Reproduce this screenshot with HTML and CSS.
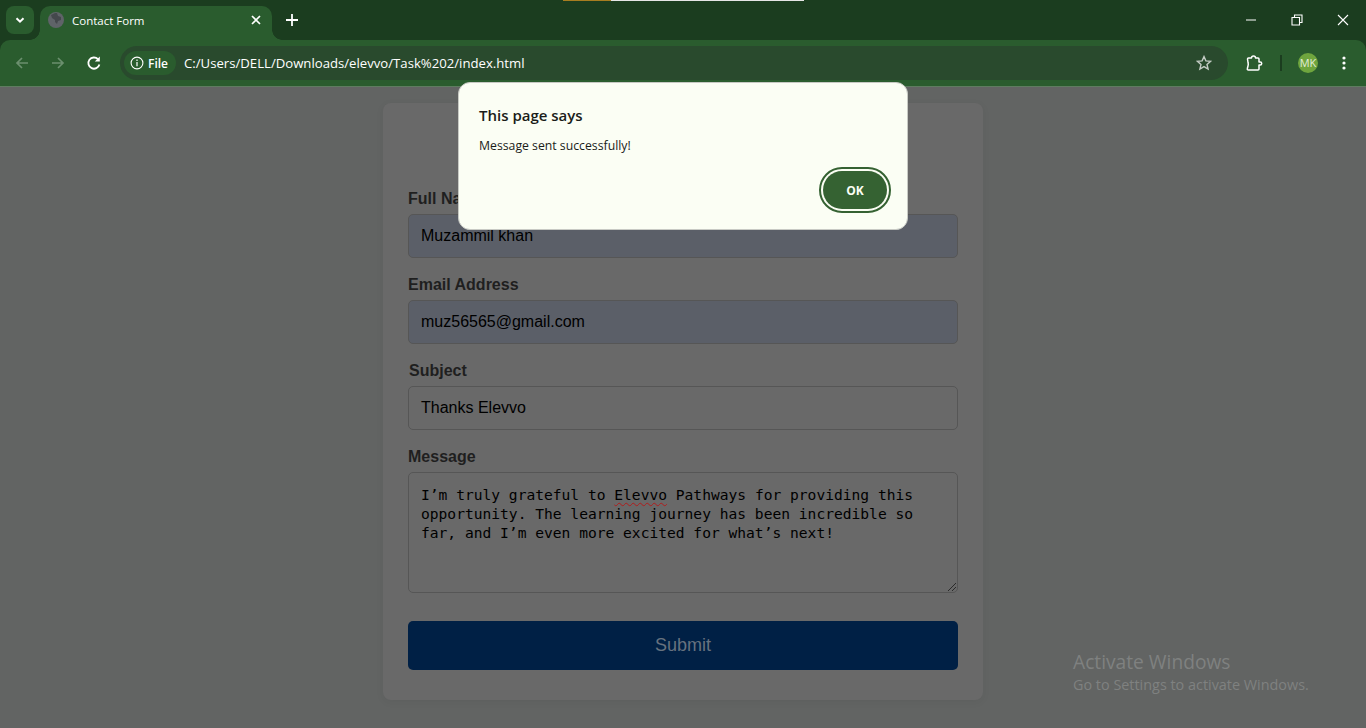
FILE: index.html
```html
<!DOCTYPE html>
<html lang="en">
<head>
<meta charset="utf-8">
<title>Contact Form</title>
<link rel="stylesheet" href="styles.css">
</head>
<body>
<div class="chrome">
<div class="strip">
  <button class="tabsearch"><svg width="12" height="12" viewBox="0 0 12 12"><path d="M2.500 4.200 6 7.700l3.500-3.500" fill="none" stroke="#fff" stroke-width="2"/></svg></button>
  <div class="tab">
    <svg class="globe" width="16" height="16" viewBox="0 0 16 16"><circle cx="8" cy="8" r="8" fill="#5f6368"/><path d="M7 1 3 3l1 3 3 2v2l2 2 1-3 3-1V5l-3-1-1-3z" fill="#44484c"/></svg>
    <span class="tabtitle">Contact Form</span>
    <svg class="tabclose" width="10" height="10" viewBox="0 0 10 10"><path d="M1 1l8 8M9 1 1 9" stroke="#fff" stroke-width="1.700"/></svg>
  </div>
  <svg class="newtab" width="12" height="12" viewBox="0 0 12 12"><path d="M6 0v12M0 6h12" stroke="#fff" stroke-width="1.800"/></svg>
  <div class="winctl">
    <span class="winbtn"><svg width="10" height="10" viewBox="0 0 10 10"><path d="M0 5h10" stroke="#fff"/></svg></span>
    <span class="winbtn"><svg width="12" height="12" viewBox="0 0 12 12"><path d="M1 3.500h7.500V11H1zM3.500 3.500V1H11v7.500H8.500" fill="none" stroke="#fff" stroke-width="1.100"/></svg></span>
    <span class="winbtn"><svg width="12" height="12" viewBox="0 0 12 12"><path d="M1 1l10 10M11 1 1 11" stroke="#fff" stroke-width="1.100"/></svg></span>
  </div>
</div>
<div class="toolbar">
  <svg class="nav" width="16" height="16" viewBox="0 0 16 16"><path d="M14 8H3M8 3 3 8l5 5" fill="none" stroke="#6b8f6e" stroke-width="1.700"/></svg>
  <svg class="nav" width="16" height="16" viewBox="0 0 16 16"><path d="M2 8h11M8 3l5 5-5 5" fill="none" stroke="#6b8f6e" stroke-width="1.700"/></svg>
  <svg class="nav" width="16" height="16" viewBox="0 0 16 16"><path d="M13.400 9.500A5.600 5.600 0 1 1 12 4.200" fill="none" stroke="#fff" stroke-width="1.800"/><path d="M13.800 1.600v5h-5z" fill="#fff"/></svg>
  <div class="omnibox">
    <div class="chip">
      <svg width="14" height="14" viewBox="0 0 14 14"><circle cx="7" cy="7" r="5.900" fill="none" stroke="#fff" stroke-width="1.100"/><path d="M7 6v4.200M7 3.600v1.300" stroke="#fff" stroke-width="1.200"/></svg>
      <span>File</span>
    </div>
    <span class="url">C:/Users/DELL/Downloads/elevvo/Task%202/index.html</span>
    <svg class="star" width="16" height="16" viewBox="0 0 16 16"><path d="M8 1.600l1.900 4.300 4.700.4-3.600 3.100 1.100 4.600L8 11.600l-4.100 2.400L5 9.400 1.400 6.300l4.700-.4z" fill="none" stroke="#c4ccc5" stroke-width="1.400"/></svg>
  </div>
  <svg class="ext" width="18" height="18" viewBox="0 0 18 18"><path d="M3.500 4H6.500a2 2 0 0 1 4 0H13a1 1 0 0 1 1 1v3h1.200a1.500 1.500 0 0 1 0 3H14v4a1 1 0 0 1-1 1H3.300a1 1 0 0 1-1-1.300l.7-2.700c.5-1.500.5-2 0-3.500L2.500 5a1 1 0 0 1 1-1z" fill="none" stroke="#fff" stroke-width="1.500" stroke-linejoin="round"/></svg>
  <span class="divider"></span>
  <span class="avatar">MK</span>
  <svg class="menu" width="4" height="14" viewBox="0 0 4 14"><circle cx="2" cy="2" r="1.600" fill="#fff"/><circle cx="2" cy="7" r="1.600" fill="#fff"/><circle cx="2" cy="12" r="1.600" fill="#fff"/></svg>
</div>
</div>
<main class="page">
  <form class="card">
    <label class="label">Full Name</label>
    <div class="field auto">Muzammil khan</div>
    <label class="label">Email Address</label>
    <div class="field auto">muz56565@gmail.com</div>
    <label class="label subject">Subject</label>
    <div class="field">Thanks Elevvo</div>
    <label class="label">Message</label>
    <div class="area">I’m truly grateful to <span class="typo">Elevvo</span> Pathways for providing this<br>opportunity. The learning journey has been incredible so<br>far, and I’m even more excited for what’s next!
      <svg class="grip" width="8" height="8" viewBox="0 0 8 8"><path d="M0 8 8 0M4 8l4-4" stroke="#2a2a2a"/></svg>
    </div>
    <div class="submit">Submit</div>
  </form>
</main>
<div class="dialog">
  <h1>This page says</h1>
  <p>Message sent successfully!</p>
  <div class="actions"><button class="ok">OK</button></div>
</div>
<div class="topbar"><i></i><b></b></div>
<div class="activate"><strong>Activate Windows</strong><span>Go to Settings to activate Windows.</span></div>
</body>
</html>
```
FILE: styles.css
```css
* { box-sizing: border-box; }
html, body { margin: 0; height: 728px; overflow: hidden; }
body { background: #626463; font-family: "Liberation Sans", Arial, sans-serif; position: relative; }
.chrome { background: #1b3d1f; }
.strip { height: 40px; display: flex; align-items: flex-start; position: relative; }
.tabsearch { width: 28px; height: 28px; margin: 6px 0 0 6px; border: 0; border-radius: 8px; background: #2a5c2e; display: flex; align-items: center; justify-content: center; padding: 0; }
.tab { width: 232px; height: 34px; margin: 6px 0 0 6px; background: #2a5c2e; border-radius: 10px 10px 0 0; display: flex; align-items: center; padding: 0 0 6px 8px; position: relative; }
.tab::before, .tab::after { content: ""; position: absolute; bottom: 0; width: 10px; height: 10px; }
.tab::before { left: -10px; background: radial-gradient(circle at 0 0, transparent 9.500px, #2a5c2e 10px); }
.tab::after { right: -10px; background: radial-gradient(circle at 100% 0, transparent 9.500px, #2a5c2e 10px); }
.globe { flex: none; }
.tabtitle { font: 11.500px "Open Sans", sans-serif; color: #fff; margin-left: 8px; flex: 1; }
.tabclose { margin-right: 11px; }
.newtab { margin: 14px 0 0 14px; }
.winctl { margin-left: auto; display: flex; height: 40px; }
.winbtn { width: 46px; height: 40px; display: flex; align-items: center; justify-content: center; }
.toolbar { height: 47px; background: #2a5c2e; border-radius: 10px 10px 0 0; border-bottom: 1px solid #5e7c60; display: flex; align-items: center; padding: 0 0 0 14px; }
.nav { margin-right: 20px; flex: none; }
.nav:nth-child(3) { margin-right: 18px; }
.omnibox { width: 1108px; height: 34px; border-radius: 17px; background: #294a2d; display: flex; align-items: center; padding: 0 16px 0 4px; }
.chip { width: 52px; height: 24px; border-radius: 12px; background: #2a5c2e; display: flex; align-items: center; padding-left: 6px; gap: 4px; }
.chip span { font: 600 12px "Open Sans", sans-serif; color: #fff; }
.url { font: 13.160px "Open Sans", sans-serif; color: #fff; margin-left: 8px; flex: 1; }
.ext { margin-left: 17px; flex: none; }
.divider { width: 2px; height: 16px; background: #1b3d1f; margin-left: 17px; }
.avatar { width: 20px; height: 20px; border-radius: 50%; background: #6fa53e; color: #e3edd8; font: 11px/20px "Open Sans", sans-serif; text-align: center; margin-left: 16px; }
.menu { margin-left: 24px; }
.page { height: 641px; display: flex; justify-content: center; padding-top: 16px; }
.card { width: 600px; height: 597px; background: #696969; border-radius: 8px; box-shadow: 0 2px 8px rgba(0,0,0,.05); padding: 84px 25px 0; display: flex; flex-direction: column; }
.label { font-weight: 700; font-size: 16px; line-height: 24px; color: #1f1f1f; height: 27px; display: block; }
.subject { padding-left: 1px; }
.field { height: 44px; border: 1px solid #565656; border-radius: 5px; font-size: 16px; line-height: 42px; padding-left: 12px; color: #000; margin-bottom: 15px; }
.auto { background: #5b5f68; }
.area { height: 121px; border: 1px solid #565656; border-radius: 5px; font: 14.600px/19px "DejaVu Sans Mono", monospace; padding: 12px 12px 0; color: #000; position: relative; white-space: nowrap; }
.typo { text-decoration: underline wavy #b01c1c 1.300px; text-underline-offset: 2px; }
.grip { position: absolute; right: 1px; bottom: 1px; }
.submit { height: 49px; background: #002045; color: #67727f; border-radius: 5px; margin-top: 28px; text-align: center; font-size: 18px; line-height: 49px; }
.dialog { position: absolute; left: 458px; top: 82px; width: 450px; height: 148px; background: #fbfef4; border: 1px solid #c8cac4; border-radius: 12px; padding: 22px 20px 0 20px; }
.dialog h1 { margin: 0; font: 600 15px/20px "Open Sans", sans-serif; color: #1a1c19; }
.dialog p { margin: 12px 0 0; font: 12.250px/18px "Open Sans", sans-serif; color: #1a1c19; }
.actions { display: flex; justify-content: flex-end; margin-top: 16px; }
.ok { width: 64px; height: 38px; border-radius: 19px; border: 0; background: #356232; color: #fbfef4; font: 700 12px "Open Sans", sans-serif; outline: 2px solid #356232; outline-offset: 2px; }
.topbar { position: absolute; left: 563px; top: 0; width: 241px; height: 1px; display: flex; }
.topbar i { width: 48px; background: #a87d20; }
.topbar b { flex: 1; background: #e6e6e6; }
.activate { position: absolute; left: 1073px; top: 649px; color: #7f8180; font-family: "Open Sans", sans-serif; display: flex; flex-direction: column; }
.activate strong { font-weight: 400; font-size: 19.200px; line-height: 26px; }
.activate span { font-size: 14.400px; line-height: 20px; }
```
